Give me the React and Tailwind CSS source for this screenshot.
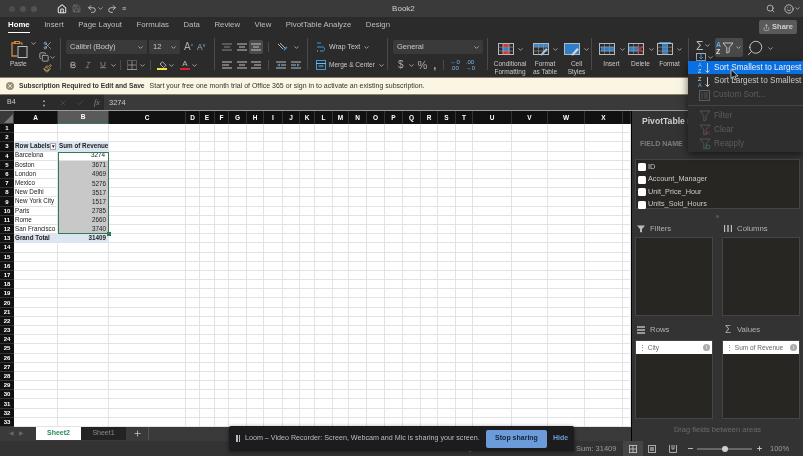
import React from "react";
import { ChevronDown, Search, Smile, Share, Home, Save, Undo2, Redo2, Bold, Italic, Underline, Scissors, Copy, Paintbrush, Plus, Minus, Check, X } from "lucide-react";

const font = "font-['Liberation_Sans',Arial,sans-serif]";

const colWidths = [44, 51, 77, 14, 15, 14, 18, 17, 19, 17, 15, 18, 16, 18, 18, 18, 18, 17, 18, 17, 39, 36, 37, 38, 8];
const colLabels = "ABCDEFGHIJKLMNOPQRSTUVWX".split("");
const tabs = ["Home", "Insert", "Page Layout", "Formulas", "Data", "Review", "View", "PivotTable Analyze", "Design"];
const cities = [
  ["Barcelona", 3274],
  ["Boston", 3671],
  ["London", 4969],
  ["Mexico", 5276],
  ["New Delhi", 3517],
  ["New York City", 1517],
  ["Paris", 2785],
  ["Rome", 2660],
  ["San Francisco", 3740],
];
const rows = Array.from({ length: 33 }, (_, i) => i + 1);

const Caret = () => <ChevronDown size={7} strokeWidth={2.5} className="shrink-0 text-[#c4c4c4]" />;
const Divider = () => <div className="h-[32px] w-px shrink-0 bg-[#4a4a4a]" />;

const Lines = ({ kind = "left", w = 10 }) => {
  const pairs = { left: [[0, 10], [0, 7], [0, 10]], center: [[0, 10], [2, 8], [0, 10]], right: [[0, 10], [3, 10], [0, 10]] }[kind];
  return (
    <svg width={w} height="8" viewBox="0 0 10 8" className="shrink-0">
      {pairs.map(([a, b], i) => (
        <line key={i} x1={a} x2={b} y1={1 + i * 3} y2={1 + i * 3} stroke="#c4c4c4" strokeWidth="1" />
      ))}
    </svg>
  );
};

const TableIcon = ({ children, w = 18 }) => (
  <svg width={w} height="14" viewBox="0 0 18 14" fill="none" className="shrink-0">
    {children}
  </svg>
);

const GridLines = () => (
  <>
    <rect x="1.5" y="1.5" width="15" height="11" stroke="#b9b9b9" />
    <path d="M1.5 5.2h15M1.5 9h15M6.5 1.5v11M11.5 1.5v11" stroke="#9a9a9a" strokeWidth=".6" />
  </>
);

const SortIcon = ({ flip = false }) => (
  <svg width="14" height="12" viewBox="0 0 14 12" className="shrink-0">
    <text x="0" y="5" fontSize="5.5" fill={flip ? "#ddd" : "#8cc4ff"} fontFamily="Liberation Sans">{flip ? "Z" : "A"}</text>
    <text x="0" y="11" fontSize="5.5" fill={flip ? "#6ab2ff" : "#ddd"} fontFamily="Liberation Sans">{flip ? "A" : "Z"}</text>
    <path d="M9.5 1v9.5M7.5 8.5l2 2 2-2" stroke="#ddd" fill="none" strokeWidth=".9" />
  </svg>
);

const FunnelIcon = ({ color = "#5d5d5d", mark }) => (
  <svg width="12" height="12" viewBox="0 0 12 12" fill="none" className="shrink-0">
    <path d="M1 1h10L7.2 5.6V10L4.8 11V5.6z" stroke={color} strokeWidth=".8" />
    {mark === "x" && <path d="M7 7l4 4M11 7l-4 4" stroke="#7a3030" strokeWidth=".9" />}
    {mark === "r" && <circle cx="9" cy="9" r="2" stroke="#3f6d4a" strokeWidth=".9" />}
  </svg>
);

const RibbonBtn = ({ label, icon, width }) => (
  <div className="flex shrink-0 flex-col items-center" style={{ width }}>
    <div className="flex h-[20px] items-center gap-[2px]">
      {icon}
      <Caret />
    </div>
    <div className="mt-[1px] whitespace-nowrap text-center text-[6.5px] leading-[7.5px] text-[#c9c9c9]">{label}</div>
  </div>
);

const Ribbon = () => (
  <div className="flex h-[39px] shrink-0 items-start bg-[#2b2b2b] text-[#c9c9c9]">
    {/* paste + clipboard */}
    <div className="flex h-full w-[60px] shrink-0 pl-[10px] pt-[2px]">
      <div className="w-[20px]">
        <svg width="19" height="19" viewBox="0 0 19 19" fill="none">
          <path d="M6 3H2v13h5" stroke="#d08a3a" strokeWidth="1.3" />
          <path d="M4.5 3.5h5V1.5h-5zM9.5 3H12v2" stroke="#d08a3a" strokeWidth="1.1" />
          <rect x="8" y="6.5" width="9" height="11" stroke="#bdbdbd" strokeWidth="1" />
        </svg>
        <div className="mt-[1px] text-[6.5px] leading-[8px]">Paste</div>
      </div>
      <Caret />
      <div className="ml-[2px] flex flex-col items-center gap-[2px] pt-[1px]">
        <Scissors size={9} className="text-[#9fb4c8]" />
        <div className="flex items-center"><Copy size={10} className="text-[#bbb]" /><Caret /></div>
        <Paintbrush size={9} className="text-[#d7b46a]" />
      </div>
    </div>
    <Divider />
    {/* font */}
    <div className="flex h-full w-[153px] shrink-0 flex-col pl-[5px] pt-[2px]">
      <div className="flex h-[14px] items-center">
        <div className="flex h-full w-[81px] items-center justify-between rounded-l-[2px] bg-[#3a3a3a] pl-[4px] pr-[3px] text-[7.5px]">Calibri (Body)<Caret /></div>
        <div className="ml-[2px] flex h-full w-[31px] items-center justify-between rounded-r-[2px] bg-[#3a3a3a] pl-[4px] pr-[3px] text-[7.5px]">12<Caret /></div>
        <span className="ml-[4px] text-[10px] leading-none text-[#aaa]">A<sup className="text-[5px] text-[#6ab2ff]">^</sup></span>
        <span className="ml-[4px] text-[8.5px] leading-none text-[#aaa]">A<sup className="text-[5px] text-[#6ab2ff]">v</sup></span>
      </div>
      <div className="mt-[4px] flex h-[14px] items-center pl-[3px]">
        <Bold size={8} strokeWidth={3} className="text-[#aaa]" />
        <Italic size={8} className="ml-[7px] text-[#888]" />
        <Underline size={8} className="ml-[7px] text-[#aaa]" />
        <span className="ml-[3px]"><Caret /></span>
        <div className="ml-[3px] h-[10px] w-px bg-[#4a4a4a]" />
        <svg width="10" height="10" viewBox="0 0 10 10" fill="none" className="ml-[6px]"><rect x=".5" y=".5" width="9" height="9" stroke="#888" strokeDasharray="1 1" /><path d="M0 9.5h10M5 1v8M1 5h8" stroke="#bbb" strokeWidth=".6" /></svg>
        <span className="ml-[2px]"><Caret /></span>
        <div className="ml-[4px] h-[10px] w-px bg-[#4a4a4a]" />
        <div className="ml-[6px] flex w-[10px] flex-col items-center">
          <svg width="9" height="7" viewBox="0 0 9 7" fill="none"><path d="M4.5 .8l3.5 3.5-2.5 2.2-3.5-3.5z" stroke="#ccc" strokeWidth=".8" /></svg>
          <div className="h-[2px] w-[10px] bg-[#f2e23c]" />
        </div>
        <span className="ml-[1px]"><Caret /></span>
        <div className="ml-[5px] flex w-[10px] flex-col items-center text-[8px] leading-[8px] text-[#bbb]">A<div className="h-[2px] w-[10px] bg-[#e0202c]" /></div>
        <span className="ml-[1px]"><Caret /></span>
      </div>
    </div>
    <Divider />
    {/* alignment */}
    <div className="flex h-full w-[92px] shrink-0 flex-col pl-[7px] pt-[2px]">
      <div className="flex h-[14px] items-center gap-[5px]">
        <div className="flex w-[10px] justify-center opacity-60"><Lines kind="center" /></div>
        <div className="flex w-[10px] justify-center"><Lines kind="center" /></div>
        <div className="-ml-[3px] flex h-[14px] w-[14px] items-center justify-center rounded-[2px] bg-[#4a4a4a]"><Lines kind="center" /></div>
        <div className="h-[10px] w-px bg-[#4a4a4a]" />
        <svg width="11" height="10" viewBox="0 0 11 10" fill="none" className="ml-[3px]"><path d="M1 2l5 5M3 1l5 5" stroke="#b5b5b5" /><path d="M7 8l3-3" stroke="#3a9be0" strokeWidth="1.2" /></svg>
        <Caret />
      </div>
      <div className="mt-[4px] flex h-[14px] items-center gap-[5px]">
        <Lines kind="left" />
        <Lines kind="center" />
        <div className="ml-[-1px]"><Lines kind="right" /></div>
        <div className="ml-[2px] h-[10px] w-px bg-[#4a4a4a]" />
        <svg width="10" height="8" viewBox="0 0 10 8" className="ml-[2px]"><path d="M0 1h10M5 4h5M0 7h10" stroke="#bbb" /><path d="M4 2.5L1 4l3 1.5z" fill="#3a9be0" /></svg>
        <svg width="10" height="8" viewBox="0 0 10 8"><path d="M0 1h10M0 4h5M0 7h10" stroke="#bbb" /><path d="M6 2.5L9 4 6 5.5z" fill="#3a9be0" /></svg>
      </div>
    </div>
    <Divider />
    {/* wrap / merge */}
    <div className="flex h-full w-[79px] shrink-0 flex-col pl-[8px] pt-[2px] text-[6.5px]">
      <div className="flex h-[14px] items-center gap-[3px] text-[7px]">
        <svg width="9" height="11" viewBox="0 0 9 11" fill="none"><path d="M1 1h4M1 5h6c2 0 2 4 0 4H4" stroke="#3a9be0" /><path d="M1 9h1" stroke="#bbb" /></svg>
        <span className="ml-[1px]">Wrap Text</span><Caret />
      </div>
      <div className="mt-[4px] flex h-[14px] items-center gap-[3px]">
        <svg width="10" height="10" viewBox="0 0 10 10" fill="none"><rect x=".5" y=".5" width="9" height="9" stroke="#3a9be0" /><path d="M0 3.5h10M2.5 6h5" stroke="#7ab6e6" /></svg>
        <span>Merge &amp; Center</span><Caret />
      </div>
    </div>
    <Divider />
    {/* number */}
    <div className="flex h-full w-[99px] shrink-0 flex-col pl-[5px] pt-[2px]">
      <div className="flex h-[14px] w-[90px] items-center justify-between rounded-[2px] bg-[#3a3a3a] pl-[4px] pr-[3px] text-[7.5px]">General<Caret /></div>
      <div className="mt-[4px] flex h-[14px] items-center pl-[5px] text-[#aaa]">
        <span className="text-[10px] leading-none">$</span>
        <span className="ml-[4px]"><Caret /></span>
        <span className="ml-[3px] text-[11px] leading-none">%</span>
        <span className="ml-[6px] text-[11px] font-bold leading-none">,</span>
        <div className="ml-[7px] h-[10px] w-px bg-[#4a4a4a]" />
        <span className="ml-[6px] text-[6px] leading-[6px] text-[#7ab6e6]">←0<br />.00</span>
        <span className="ml-[6px] text-[6px] leading-[6px] text-[#7ab6e6]">.00<br />→0</span>
      </div>
    </div>
    <Divider />
    {/* styles */}
    <div className="flex h-full w-[103px] shrink-0 pl-[5px] pt-[1px]">
      <RibbonBtn width={34} label={<>Conditional<br />Formatting</>} icon={
        <TableIcon><rect x="5" y="1.5" width="8" height="3.6" fill="#cf3a3a" /><rect x="5" y="5.2" width="8" height="3.8" fill="#2f86d0" /><rect x="5" y="9" width="8" height="3.5" fill="#cf3a3a" /><GridLines /></TableIcon>
      } />
      <RibbonBtn width={36} label={<>Format<br />as Table</>} icon={
        <TableIcon><rect x="1.5" y="1.5" width="15" height="3.5" fill="#2f86d0" /><GridLines /><path d="M8 13l6-7 2 1.5-6 6z" fill="#9fc3e0" /></TableIcon>
      } />
      <RibbonBtn width={27} label={<>Cell<br />Styles</>} icon={
        <TableIcon><rect x="1.5" y="1.5" width="15" height="11" fill="#2f7fc8" stroke="#b9b9b9" /><path d="M8 13l6-7 2 1.5-6 6z" fill="#c9d8e4" /></TableIcon>
      } />
    </div>
    <Divider />
    {/* cells */}
    <div className="flex h-full w-[96px] shrink-0 pl-[5px] pt-[1px]">
      <RibbonBtn width={29} label="Insert" icon={
        <TableIcon w={20}><rect x="3" y="4.5" width="14" height="5" fill="#2f7fc8" /><GridLines /></TableIcon>
      } />
      <RibbonBtn width={29} label="Delete" icon={
        <TableIcon w={20}><rect x="1.5" y="4.5" width="10" height="5" fill="#2f7fc8" /><GridLines /><path d="M10 4l6 7M16 4l-6 7" stroke="#d33" strokeWidth="1.1" /></TableIcon>
      } />
      <RibbonBtn width={29} label="Format" icon={
        <TableIcon><path d="M3 .5h12" stroke="#3a9be0" /><rect x="6.5" y="1.5" width="5" height="11" fill="#2f7fc8" /><GridLines /></TableIcon>
      } />
    </div>
    <Divider />
    {/* editing */}
    <div className="flex h-full shrink-0 items-start">
      <div className="ml-[7px] flex w-[19px] flex-col">
        <div className="flex h-[15px] items-center gap-[1px] text-[12px] leading-none text-[#bbb]">Σ<Caret /></div>
        <div className="flex items-center gap-[1px]">
          <svg width="10" height="8" viewBox="0 0 10 8" fill="none"><rect x=".5" y=".5" width="9" height="7" stroke="#aaa" /><path d="M5 1v5M3 4l2 2 2-2" stroke="#3a9be0" /></svg>
          <Caret />
        </div>
      </div>
      <div className="flex h-[19px] w-[28px] items-center justify-center gap-[1px] rounded-[2px] bg-[#4a4a4a]">
        <span className="text-[7px] font-bold leading-[7px] text-[#5aa7ea]">A<br /><span className="text-[#ddd]">Z</span></span>
        <FunnelIcon color="#ddd" />
        <Caret />
      </div>
      <div className="ml-[3px] flex h-[20px] items-center gap-[3px]">
        <Search size={18} strokeWidth={1.1} className="-scale-x-100 text-[#ddd]" />
        <Caret />
      </div>
    </div>
  </div>
);

const SortMenu = () => (
  <div className="absolute left-[688px] top-[61px] z-20 h-[91px] w-[115px] bg-[#2e2e2e] text-[8.2px] shadow-[0_2px_8px_rgba(0,0,0,0.6)]">
    <div className="flex h-[13px] items-center gap-[2px] bg-[#0a6fe0] pl-[10px] pt-[1px] text-[#e8f0ff]"><SortIcon /><span className="whitespace-nowrap">Sort Smallest to Largest</span></div>
    <div className="flex h-[14px] items-center gap-[2px] pl-[10px] pt-[1px] text-[#c9c9c9]"><SortIcon flip /><span className="whitespace-nowrap">Sort Largest to Smallest</span></div>
    <div className="flex h-[14px] items-center gap-[3px] pl-[11px] pt-[1px] text-[#5d5d5d]">
      <svg width="11" height="11" viewBox="0 0 11 11" fill="none" className="shrink-0"><rect x=".5" y=".5" width="10" height="10" stroke="#5d5d5d" /><path d="M3 2v7M6 2v7M8 2v7" stroke="#5d5d5d" strokeWidth=".7" /></svg>
      Custom Sort...
    </div>
    <div className="my-[3px] h-px bg-[#444]" />
    <div className="flex h-[14px] items-center gap-[3px] pl-[11px] text-[#5d5d5d]"><FunnelIcon />Filter</div>
    <div className="flex h-[14px] items-center gap-[3px] pl-[11px] text-[#5d5d5d]"><FunnelIcon mark="x" />Clear</div>
    <div className="flex h-[14px] items-center gap-[3px] pl-[11px] text-[#5d5d5d]"><FunnelIcon mark="r" />Reapply</div>
    {/* mouse pointer */}
    <svg width="9" height="12" viewBox="0 0 9 12" className="absolute left-[42px] top-[8px]">
      <path d="M1 .5v9l2.3-2 1.5 3.5 1.5-.6-1.5-3.4H8z" fill="#111" stroke="#eee" strokeWidth=".7" />
    </svg>
  </div>
);

const Sheet = () => (
  <div
    className="grid h-[303px] bg-white text-[6.3px] leading-none text-[#222]"
    style={{
      gridTemplateColumns: `14px ${colWidths.map((w) => `${w}px`).join(" ")}`,
      gridTemplateRows: "repeat(33, minmax(0, 1fr))",
    }}
  >
    {rows.map((r) => (
      <React.Fragment key={r}>
        <div className="flex items-center justify-center border-b border-[#333] bg-[#111] text-[6px] font-bold text-white" style={{ gridRow: r, gridColumn: 1 }}>{r}</div>
        {colWidths.map((_, c) => {
          const city = r >= 4 && r <= 12 ? cities[r - 4] : null;
          const total = r === 13;
          const head = r === 3;
          let content = null;
          let cls = "border-b border-r border-[#e3e3e3]";
          if (c < 2 && (head || total)) cls = "border-b border-r border-[#dce6f1] bg-[#dce6f1] font-bold";
          if (c === 0 && head) content = <><span>Row Labels</span><span className="ml-auto flex h-[7px] w-[8px] items-center justify-center border border-[#aaa] bg-white text-[5px]">▾</span></>;
          if (c === 1 && head) content = "Sum of Revenue";
          if (c === 0 && total) content = "Grand Total";
          if (c === 1 && total) content = <span className="ml-auto pr-[1px]">31409</span>;
          if (c === 0 && city) content = city[0];
          if (c === 1 && city) {
            content = <span className="ml-auto pr-[2px]">{city[1]}</span>;
            cls = r === 4 ? "border-b border-r border-[#e3e3e3]" : "bg-[#c8c8c8]";
          }
          return (
            <div
              key={c}
              className={`flex min-w-0 items-center overflow-hidden whitespace-nowrap px-[1px] ${cls}`}
              style={{ gridRow: r, gridColumn: c + 2 }}
            >
              {content}
            </div>
          );
        })}
      </React.Fragment>
    ))}
    {/* selected range */}
    <div className="relative z-10 col-start-3 col-end-4 row-start-4 row-end-13 border-[1.5px] border-[#2f7a58]">
      <div className="absolute -bottom-[3px] -right-[3px] h-[4px] w-[4px] bg-[#2f7a58]" />
    </div>
  </div>
);

const AreaBox = ({ item }) => (
  <div className="h-[79px] w-[78px] border border-[#454545] bg-[#282622]">
    {item && (
      <div className="flex h-[13px] items-center justify-between bg-white pl-[3px] pr-[2px] text-[6.5px] text-[#666]">
        <span>⋮ {item}</span>
        <span className="flex h-[7px] w-[7px] items-center justify-center rounded-full bg-[#aaa] text-[5px] text-white">i</span>
      </div>
    )}
  </div>
);

const AreaLabel = ({ icon, label }) => (
  <div className="flex h-[17px] w-[78px] items-center gap-[5px] pl-[2px] text-[7.8px] text-[#b0b0b0]">
    <span className="flex w-[8px] justify-center">{icon}</span>
    {label}
  </div>
);

const PivotPanel = () => (
  <div className="flex w-[172px] shrink-0 flex-col border-l border-black bg-[#333333] px-[3px] text-[#c9c9c9]">
    <div className="flex h-[18px] items-center whitespace-nowrap pl-[7px] pt-[2px] text-[8.6px] font-bold text-[#cfcfcf]">PivotTable Fields</div>
    <div className="mt-[9px] h-[21px] whitespace-nowrap pl-[5px] pt-[1px] text-[7px] font-bold text-[#7d7d7d]">FIELD NAME</div>
    <div className="flex h-[50px] flex-col border border-[#454545] bg-[#282622] pl-[2px] pt-[1px]">
      {["ID", "Account_Manager", "Unit_Price_Hour", "Units_Sold_Hours"].map((f) => (
        <div key={f} className="flex h-[12.5px] shrink-0 items-center gap-[2px] text-[7.3px]">
          <div className="h-[8px] w-[8px] rounded-[1.5px] bg-white" />
          {f}
        </div>
      ))}
    </div>
    <div className="flex h-[28px] flex-col">
      <div className="mx-auto mt-[6px] h-[3px] w-[3px] rounded-full bg-[#555]" />
      <div className="mt-[2px] flex justify-between">
        <AreaLabel label="Filters" icon={<svg width="8" height="8" viewBox="0 0 8 8"><path d="M0 .5h8L5 4v3.5L3 7V4z" fill="#bbb" /></svg>} />
        <AreaLabel label="Columns" icon={<svg width="8" height="7" viewBox="0 0 8 7"><path d="M.5 0v7M4 0v7M7.5 0v7" stroke="#bbb" strokeWidth="1.4" /></svg>} />
      </div>
    </div>
    <div className="flex justify-between"><AreaBox /><AreaBox /></div>
    <div className="flex h-[24px] justify-between pt-[5px]">
      <AreaLabel label="Rows" icon={<svg width="8" height="8" viewBox="0 0 8 8"><path d="M0 1h8M0 4h8M0 7h8" stroke="#bbb" strokeWidth="1.4" /></svg>} />
      <AreaLabel label="Values" icon={<span className="text-[10px] leading-none">Σ</span>} />
    </div>
    <div className="flex justify-between"><AreaBox item="City" /><AreaBox item="Sum of Revenue" /></div>
    <div className="flex h-[22px] items-center justify-center text-[7.5px] text-[#6a6a6a]">Drag fields between areas</div>
  </div>
);

export default function App() {
  return (
    <div className={`relative flex h-[456px] w-[803px] flex-col overflow-hidden bg-[#2b2b2b] blur-[0.35px] ${font}`}>
      {/* title bar */}
      <div className="flex h-[17px] shrink-0 items-center bg-[#3a3a3a] text-[#cfcfcf]">
        <div className="ml-[9px] flex gap-[5px]">
          <div className="h-[6px] w-[6px] rounded-full bg-[#4d4d4d]" />
          <div className="h-[6px] w-[6px] rounded-full bg-[#535353]" />
          <div className="h-[6px] w-[6px] rounded-full bg-[#535353]" />
        </div>
        <Home size={10} strokeWidth={2.5} className="ml-[20px] text-[#e0e0e0]" />
        <Save size={9} className="ml-[5px] text-[#777]" />
        <Undo2 size={10} className="ml-[6px]" />
        <Caret />
        <Redo2 size={10} className="ml-[3px]" />
        <span className="ml-[5px] text-[7px] leading-none">≡</span>
        <div className="ml-[266px] w-[24px] text-[8px]">Book2</div>
        <Search size={9} className="ml-[350px]" />
        <Smile size={10} className="ml-[9px]" />
        <Caret />
      </div>

      {/* tabs */}
      <div className="flex h-[21px] shrink-0 items-start bg-[#2b2b2b] pl-[8px] pt-[3px]">
        {tabs.map((t, i) => (
          <div key={t} className={`mr-[14.5px] whitespace-nowrap border-b pb-[2px] text-[7.8px] leading-[10px] ${i === 0 ? "border-white font-bold text-white" : "border-transparent text-[#bdbdbd]"}`}>
            {t}
          </div>
        ))}
        <div className="ml-auto mr-[6px] flex h-[14px] w-[38px] items-center justify-center gap-[2px] rounded-[2px] bg-[#5a5a5a] text-[7.5px] font-bold text-[#cfcfcf]">
          <Share size={7} />Share
        </div>
      </div>

      <Ribbon />

      {/* subscription notice */}
      <div className="flex h-[18px] shrink-0 items-center border-y border-[#8a7f68] bg-[#fbf5e3] pl-[6px] text-[7px] text-[#333]">
        <div className="flex h-[8px] w-[8px] items-center justify-center rounded-full bg-[#9a8f78]"><X size={6} strokeWidth={3} className="text-[#fbf5e3]" /></div>
        <span className="ml-[5px] whitespace-nowrap text-[6.7px] font-bold">Subscription Required to Edit and Save</span>
        <span className="ml-[5px] whitespace-nowrap">Start your free one month trial of Office 365 or sign in to activate an existing subscription.</span>
      </div>

      {/* formula bar */}
      <div className="flex h-[16px] shrink-0 items-center border-b border-[#9a9a9a] bg-[#2b2b2b] text-[#c9c9c9]">
        <span className="ml-[7px] w-[35px] text-[7px]">B4</span>
        <span className="flex flex-col text-[4px] leading-[5px] text-[#aaa]"><span>▲</span><span>▼</span></span>
        <X size={8} className="ml-[13px] text-[#555]" />
        <Check size={8} className="ml-[9px] text-[#555]" />
        <span className="ml-[10px] w-[6px] font-['Liberation_Serif',serif] text-[8px] italic text-[#888]">fx</span>
        <div className="ml-[4px] flex h-full flex-1 items-center bg-[#3a3a3a] pl-[5px] text-[7.5px]">3274</div>
      </div>

      <div className="flex h-[330px] shrink-0">
        <div className="flex w-[631px] shrink-0 flex-col">
          {/* column headers */}
          <div className="flex h-[13px] shrink-0 bg-[#111] text-[6.5px] font-bold text-white">
            <div className="flex w-[14px] shrink-0 items-end justify-end bg-[#3a3a3a] p-[1px]">
              <div className="h-0 w-0 border-b-[9px] border-l-[9px] border-b-[#777] border-l-transparent" />
            </div>
            {colWidths.map((w, i) => (
              <div
                key={i}
                className={`flex shrink-0 items-center justify-center border-r border-[#333] ${i === 1 ? "border-b border-b-[#2f7a58] bg-[#5a5a5a]" : ""}`}
                style={{ width: w }}
              >
                {colLabels[i]}
              </div>
            ))}
          </div>
          <Sheet />
          {/* sheet tabs */}
          <div className="flex h-[14px] shrink-0 items-start bg-[#3a3a3a]">
            <span className="ml-[9px] w-[27px] text-[6px] leading-[13px] text-[#666]">◀&nbsp;&nbsp;&nbsp;▶</span>
            <div className="flex h-[13px] w-[45px] items-center justify-center bg-white text-[7px] font-bold text-[#2f8a5c]">Sheet2</div>
            <div className="flex h-[13px] w-[45px] items-center justify-center bg-[#232323] text-[7px] text-[#8a8a8a]">Sheet1</div>
            <Plus size={9} className="ml-[7px] mt-[2px] text-[#c9c9c9]" />
            <div className="ml-[6px] h-[13px] w-px bg-[#555]" />
          </div>
        </div>
        <PivotPanel />
      </div>

      {/* status bar */}
      <div className="flex h-[15px] shrink-0 items-center bg-[#333333] text-[7.5px] text-[#9a9a9a]">
        <span className="ml-[450px] w-[126px] whitespace-nowrap text-[7px] text-[#777]">Average: 3490.888889&nbsp;&nbsp;&nbsp;&nbsp;Count: 9</span>
        <span className="w-[47px] whitespace-nowrap">Sum: 31409</span>
        <div className="flex h-[15px] w-[20px] items-center justify-center bg-[#454545]">
          <svg width="8" height="8" viewBox="0 0 8 8"><path d="M0 .5h8M0 4h8M0 7.5h8M.5 0v8M4 0v8M7.5 0v8" stroke="#ccc" strokeWidth=".8" /></svg>
        </div>
        <svg width="8" height="8" viewBox="0 0 8 8" fill="none" className="ml-[5px]"><rect x=".5" y=".5" width="7" height="7" stroke="#aaa" /><rect x="2" y="2" width="4" height="4" fill="#888" /></svg>
        <svg width="8" height="8" viewBox="0 0 8 8" fill="none" className="ml-[13px]"><path d="M.5 0v7.5h7V0M3 0v4h2V0" stroke="#aaa" /></svg>
        <Minus size={7} strokeWidth={3} className="ml-[10px] text-[#ccc]" />
        <div className="relative ml-[3px] h-[2px] w-[55px] bg-[#666]">
          <div className="absolute -top-[2px] left-[25px] h-[6px] w-[6px] rounded-full bg-[#d0d0d0]" />
        </div>
        <Plus size={7} strokeWidth={3} className="ml-[4px] text-[#ccc]" />
        <span className="ml-[7px]">100%</span>
      </div>

      <SortMenu />

      {/* screen recorder notice */}
      <div className="absolute left-[229px] top-[426px] z-30 flex h-[25px] w-[345px] items-center rounded-[2px] bg-[#1c1c1e] text-[7.15px] text-[#bdbdbd] shadow-[0_1px_4px_rgba(0,0,0,0.5)]">
        <span className="ml-[7px] flex gap-[1px]"><span className="h-[7px] w-[1.5px] bg-[#bbb]" /><span className="h-[7px] w-[1.5px] bg-[#bbb]" /></span>
        <span className="ml-[5px] w-[241px] whitespace-nowrap">Loom – Video Recorder: Screen, Webcam and Mic is sharing your screen.</span>
        <div className="flex h-[18px] w-[61px] items-center justify-center rounded-[2px] bg-[#6b9bd8] text-[7px] font-bold text-[#14233a]">Stop sharing</div>
        <span className="ml-[6px] text-[7px] font-bold text-[#6b9bd8]">Hide</span>
      </div>
    </div>
  );
}
